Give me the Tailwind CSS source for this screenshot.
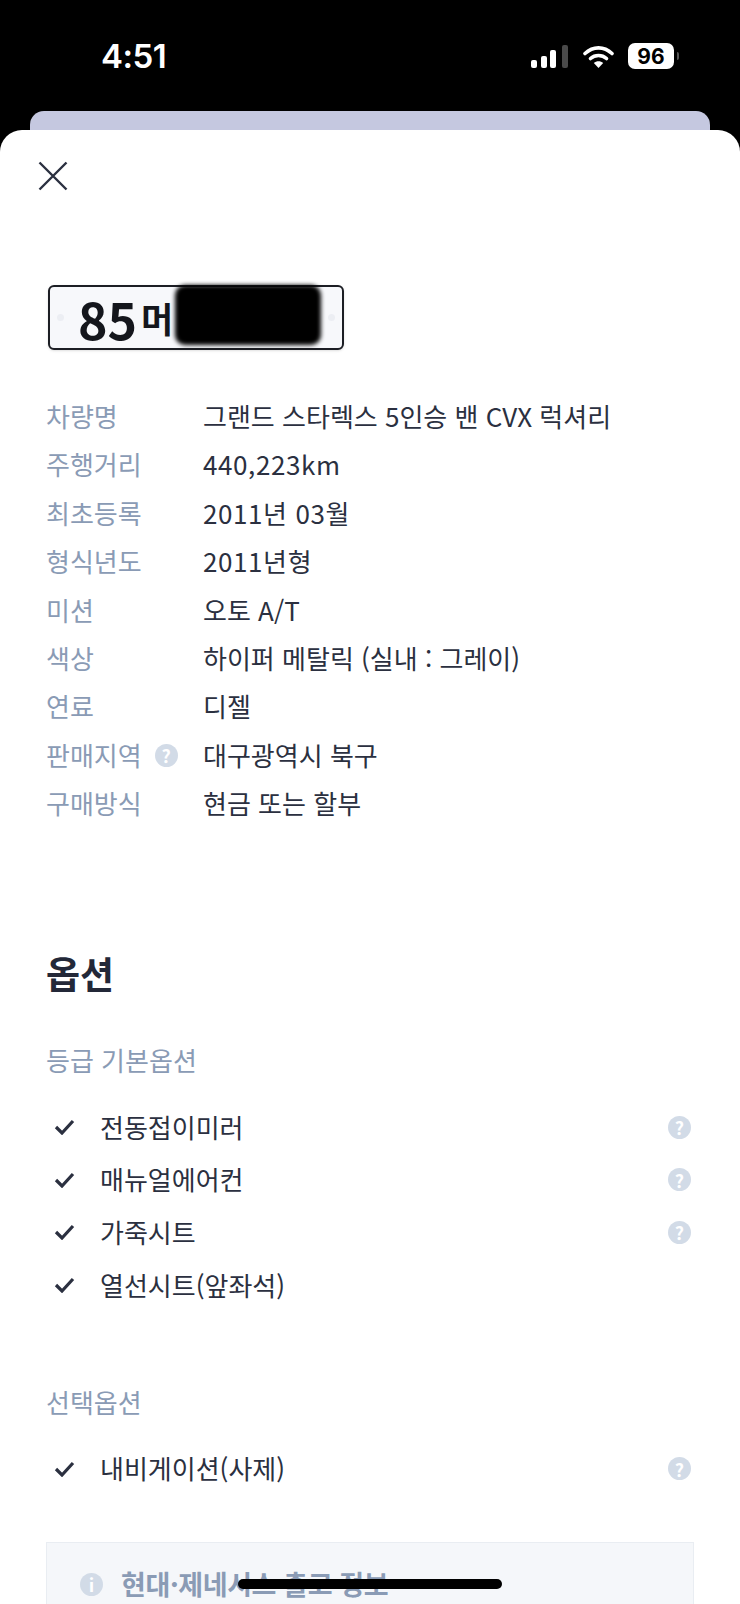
<!DOCTYPE html>
<html lang="ko">
<head>
    <meta charset="UTF-8" />
    <meta name="viewport" content="width=device-width, initial-scale=1.0" />
    <title>차량 기본정보</title>
    <script src="https://cdn.jsdelivr.net/npm/@tailwindcss/browser@4"></script>
</head>
<body class="bg-black">
    <div class="relative w-[740px] h-[1604px] overflow-hidden bg-black font-['Noto_Sans_CJK_KR','Noto_Sans',sans-serif]">

        <!-- status bar -->
        <div class="h-[111px] relative text-white">
            <div class="flex items-center justify-between pl-[101px] pr-[61px] pt-[38px]">
                <span class="font-['Inter',sans-serif] font-semibold text-[33px] leading-[36px] tracking-[-0.5px]">4:51</span>
                <div class="flex items-center">
                    <svg width="37" height="23" viewBox="0 0 37 23" class="mr-[15px]">
                        <rect x="0" y="15" width="6" height="8" rx="2" fill="#fff" />
                        <rect x="10" y="11" width="6" height="12" rx="2" fill="#fff" />
                        <rect x="19" y="5" width="6" height="18" rx="2" fill="#fff" />
                        <rect x="31" y="0" width="6" height="23" rx="2" fill="#4a4a4a" />
                    </svg>
                    <svg width="31" height="23" viewBox="0 0 31 23" class="mr-[14px]">
                        <path d="M2 8.5C10 1 21 1 29 8.5" fill="none" stroke="#fff" stroke-width="3.6" stroke-linecap="round" />
                        <path d="M7.5 13.5C12 9.5 19 9.5 23.5 13.5" fill="none" stroke="#fff" stroke-width="3.6" stroke-linecap="round" />
                        <path d="M15.5 23L10.8 18C13.5 15.6 17.5 15.6 20.2 18Z" fill="#fff" />
                    </svg>
                    <div class="w-[46px] h-[26px] rounded-[7px] bg-white text-black flex items-center justify-center font-['Inter',sans-serif] font-bold text-[21px] leading-none">96</div>
                    <div class="ml-[3px] w-[2px] h-[8px] rounded-r-full bg-[#555]"></div>
                </div>
            </div>
        </div>

        <!-- card behind the sheet -->
        <div class="mx-[30px] h-[40px] rounded-t-[14px] bg-[#c5c8e0]"></div>

        <!-- sheet -->
        <div class="-mt-[21px] h-[1474px] relative bg-white rounded-t-[22px] overflow-hidden">
            <div class="pl-[38px] pt-[31px]">
                <svg width="30" height="30" viewBox="0 0 30 30" fill="none" stroke="#2b3040" stroke-width="2.4">
                    <path d="M1.5 1.5L28.5 28.5M28.5 1.5L1.5 28.5" />
                </svg>
            </div>

            <!-- plate -->
            <div class="relative ml-[48px] mt-[94px] w-[296px] h-[65px] rounded-[6px] border-2 border-[#1c1e24] bg-[#f7f8fb] shadow-sm flex items-center pl-[28px] text-[#14161c]">
                <span class="absolute left-[7px] top-[27px] w-[7px] h-[7px] rounded-full bg-[#eceef3]"></span>
                <span class="absolute right-[7px] top-[27px] w-[7px] h-[7px] rounded-full bg-[#eceef3]"></span>
                <span class="font-bold text-[50px] leading-none">85</span>
                <span class="ml-[4px] font-bold text-[35px] leading-none">머</span>
                <div class="absolute left-[125px] top-[-2px] w-[146px] h-[60px] rounded-[10px] bg-black blur-[2px]"></div>
            </div>

            <!-- car info -->
            <div class="mt-[42px] ml-[46px] flex flex-col text-[26px] leading-[48.4px]">
                <div class="flex"><span class="w-[157px] text-[#8a9bb5]">차량명</span><span class="text-[#2b3040]">그랜드 스타렉스 5인승 밴 CVX 럭셔리</span></div>
                <div class="flex"><span class="w-[157px] text-[#8a9bb5]">주행거리</span><span class="text-[#2b3040] tracking-[0.6px]">440,223km</span></div>
                <div class="flex"><span class="w-[157px] text-[#8a9bb5]">최초등록</span><span class="text-[#2b3040] tracking-[0.6px]">2011년 03월</span></div>
                <div class="flex"><span class="w-[157px] text-[#8a9bb5]">형식년도</span><span class="text-[#2b3040] tracking-[0.6px]">2011년형</span></div>
                <div class="flex"><span class="w-[157px] text-[#8a9bb5]">미션</span><span class="text-[#2b3040]">오토 A/T</span></div>
                <div class="flex"><span class="w-[157px] text-[#8a9bb5]">색상</span><span class="text-[#2b3040]">하이퍼 메탈릭 (실내 : 그레이)</span></div>
                <div class="flex"><span class="w-[157px] text-[#8a9bb5]">연료</span><span class="text-[#2b3040]">디젤</span></div>
                <div class="flex">
                    <span class="w-[157px] flex items-center text-[#8a9bb5]">판매지역
                        <span class="ml-[13px] w-[23px] h-[23px] rounded-full bg-[#d2dbe7] text-white flex items-center justify-center font-bold text-[18px] leading-none">?</span>
                    </span>
                    <span class="text-[#2b3040]">대구광역시 북구</span>
                </div>
                <div class="flex"><span class="w-[157px] text-[#8a9bb5]">구매방식</span><span class="text-[#2b3040]">현금 또는 할부</span></div>
            </div>

            <!-- options -->
            <h2 class="mt-[122px] ml-[46px] font-bold text-[37px] leading-[46px] text-[#232838]">옵션</h2>

            <div class="mt-[46px] ml-[46px] text-[26px] leading-[36px] text-[#8a9bb5]">등급 기본옵션</div>
            <div class="mt-[23px] ml-[54px] mr-[49px] flex flex-col text-[26px] leading-[52.7px] text-[#2b3040]">
                <div class="flex items-center">
                    <svg width="21" height="16" viewBox="0 0 21 16" fill="none" stroke="#2b3040" stroke-width="3.2" class="mr-[25px]"><path d="M2 8L8 14L19 2" /></svg>
                    <span class="flex-1">전동접이미러</span>
                    <span class="w-[23px] h-[23px] rounded-full bg-[#d2dbe7] text-white flex items-center justify-center font-bold text-[18px] leading-none">?</span>
                </div>
                <div class="flex items-center">
                    <svg width="21" height="16" viewBox="0 0 21 16" fill="none" stroke="#2b3040" stroke-width="3.2" class="mr-[25px]"><path d="M2 8L8 14L19 2" /></svg>
                    <span class="flex-1">매뉴얼에어컨</span>
                    <span class="w-[23px] h-[23px] rounded-full bg-[#d2dbe7] text-white flex items-center justify-center font-bold text-[18px] leading-none">?</span>
                </div>
                <div class="flex items-center">
                    <svg width="21" height="16" viewBox="0 0 21 16" fill="none" stroke="#2b3040" stroke-width="3.2" class="mr-[25px]"><path d="M2 8L8 14L19 2" /></svg>
                    <span class="flex-1">가죽시트</span>
                    <span class="w-[23px] h-[23px] rounded-full bg-[#d2dbe7] text-white flex items-center justify-center font-bold text-[18px] leading-none">?</span>
                </div>
                <div class="flex items-center">
                    <svg width="21" height="16" viewBox="0 0 21 16" fill="none" stroke="#2b3040" stroke-width="3.2" class="mr-[25px]"><path d="M2 8L8 14L19 2" /></svg>
                    <span class="flex-1">열선시트(앞좌석)</span>
                </div>
            </div>

            <div class="mt-[73px] ml-[46px] text-[26px] leading-[36px] text-[#8a9bb5]">선택옵션</div>
            <div class="mt-[22px] ml-[54px] mr-[49px] flex items-center text-[26px] leading-[52.7px] text-[#2b3040]">
                <svg width="21" height="16" viewBox="0 0 21 16" fill="none" stroke="#2b3040" stroke-width="3.2" class="mr-[25px]"><path d="M2 8L8 14L19 2" /></svg>
                <span class="flex-1">내비게이션(사제)</span>
                <span class="w-[23px] h-[23px] rounded-full bg-[#d2dbe7] text-white flex items-center justify-center font-bold text-[18px] leading-none">?</span>
            </div>

            <!-- notice box, cut off by the screen edge -->
            <div class="mt-[47px] mx-[46px] h-[200px] border border-[#e9edf2] bg-[#f5f7fa] pl-[33px] pt-[23px]">
                <div class="flex items-center">
                    <span class="w-[23px] h-[23px] rounded-full bg-[#d2dbe7] text-white flex items-center justify-center font-bold text-[18px] leading-none">i</span>
                    <span class="ml-[18px] font-bold text-[27px] leading-[36px] tracking-[-0.4px] text-[#8a9bb5]">현대·제네시스 출고 정보</span>
                </div>
            </div>
        </div>

        <!-- home indicator -->
        <div class="absolute left-[238px] top-[1579px] w-[264px] h-[10px] rounded-full bg-black"></div>
    </div>
</body>
</html>
